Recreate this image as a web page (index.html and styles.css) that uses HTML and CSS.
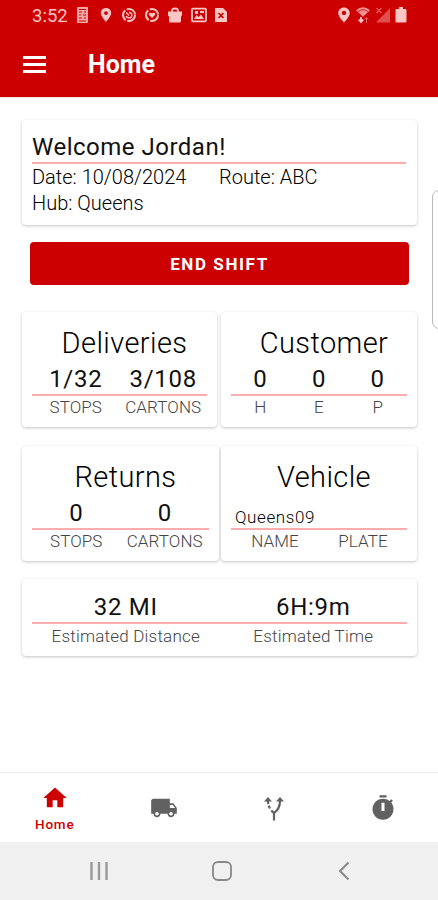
FILE: index.html
```html
<!DOCTYPE html>
<html lang="en">
<head>
    <meta charset="UTF-8">
    <meta name="viewport" content="width=device-width, initial-scale=1.0">
    <title>Home</title>
    <link rel="stylesheet" href="styles.css">
</head>
<body>
    <div class="app">
        <div class="status-bar">
            <span class="time">3:52</span>
            <div class="status-left">
                <svg width="14" height="18" viewBox="0 0 14 18"><rect x="1" y="1" width="11" height="16" rx="1" fill="currentColor" opacity=".85"/><path d="M3 3.500h7M3 6h3M8 6h2M3 9h2M7 9h3M3 12h3M8 12h2M3 15h7" stroke="#c00" stroke-width="1"/></svg>
                <svg width="14" height="18" viewBox="0 0 14 18"><path fill-rule="evenodd" d="M7 2C4 2 1.800 4.200 1.800 7.100 1.800 10.600 7 16 7 16s5.200-5.400 5.200-8.900C12.200 4.200 10 2 7 2zm0 3.200a1.900 1.900 0 1 1 0 3.800 1.900 1.900 0 0 1 0-3.800z" fill="currentColor"/></svg>
                <svg width="14" height="18" viewBox="0 0 14 18"><circle cx="7" cy="9" r="6" fill="none" stroke="currentColor" stroke-width="2" stroke-dasharray="11 1.600"/><path d="M4.200 6.500L7 9.500M7 6.500q3 0 2.800 2.800T7 11.800 4.300 10" fill="none" stroke="currentColor" stroke-width="1.500"/></svg>
                <svg width="14" height="18" viewBox="0 0 14 18"><circle cx="7" cy="9" r="6" fill="none" stroke="currentColor" stroke-width="2" stroke-dasharray="11 1.600"/><path d="M7 12L3.800 8.700C3.200 6.500 6 6 7 7.500 8 6 10.800 6.500 10.200 8.700z" fill="currentColor"/></svg>
                <svg width="14" height="18" viewBox="0 0 14 18"><path d="M0 5.500h14v4l-1 1v4.500q0 1.500-1.500 1.500h-9Q1 16.500 1 15v-4.500l-1-1z" fill="currentColor"/><path d="M4 6V4.500Q4 2.500 7 2.500t3 2V6" fill="none" stroke="currentColor" stroke-width="1.800"/></svg>
                <svg width="16" height="18" viewBox="0 0 16 18"><rect x="1" y="2.700" width="14" height="12.600" rx="1" fill="none" stroke="currentColor" stroke-width="1.800"/><path d="M3 13l2.500-4 2 2L10 8.500l3 4.500zM4 5h3v3H4zM9 5h4v2H9z" fill="currentColor"/></svg>
                <svg class="file-icon" width="14" height="18" viewBox="0 0 14 18"><path d="M1 2h8l4 4v10H1z" fill="currentColor"/><path d="M4.500 7l5 5M9.500 7l-5 5" stroke="#c00" stroke-width="1.700"/></svg>
            </div>
            <div class="status-right">
                <svg width="14" height="18" viewBox="0 0 14 18"><path fill-rule="evenodd" d="M7 1.500C3.700 1.500 1.200 4 1.200 7 1.200 10.800 7 16.500 7 16.500S12.800 10.800 12.800 7C12.800 4 10.300 1.500 7 1.500zm0 3.200a2.200 2.200 0 1 1 0 4.400 2.200 2.200 0 0 1 0-4.400z" fill="currentColor"/></svg>
                <svg width="16" height="18" viewBox="0 0 16 18"><path d="M1 4.200Q8-1.500 15 4.200L8 10.800z" fill="currentColor" opacity=".75"/><path d="M3 5.700q5-4 10 0" fill="none" stroke="#c00" stroke-width=".8"/><path d="M6 11v3" stroke="currentColor" stroke-width="1.800"/><path d="M3 14l3-1.500L9 14l-3 3.500z" fill="currentColor"/><path d="M11.500 17v-5M9.800 13.600l1.700-2 1.700 2" fill="none" stroke="currentColor" opacity=".5"/></svg>
                <svg width="16" height="18" viewBox="0 0 16 18"><path d="M15 2v14.500H1z" fill="currentColor" opacity=".4"/><path d="M1.500 2l5 5M6.500 2l-5 5" stroke="currentColor" stroke-width="1.300" opacity=".45"/></svg>
                <svg width="12" height="18" viewBox="0 0 12 18"><path d="M4 1h4v2h2.500q1 0 1 1v11.500q0 1-1 1h-9q-1 0-1-1V4q0-1 1-1H4z" fill="currentColor"/></svg>
            </div>
        </div>

        <div class="app-bar">
            <div class="menu-btn"><span></span><span></span><span></span></div>
            <h1 class="app-title">Home</h1>
        </div>

        <div class="content">
            <div class="card welcome">
                <h2 class="welcome-title">Welcome Jordan!</h2>
                <div class="welcome-row">
                    <span class="date">Date: 10/08/2024</span>
                    <span>Route: ABC</span>
                </div>
                <div class="welcome-row">Hub: Queens</div>
            </div>

            <button class="btn">END SHIFT</button>

            <div class="card-row first">
                <div class="card stat">
                    <div class="card-title">Deliveries</div>
                    <div class="values"><span>1/32</span><span>3/108</span></div>
                    <div class="labels"><span>STOPS</span><span>CARTONS</span></div>
                </div>
                <div class="card stat">
                    <div class="card-title">Customer</div>
                    <div class="values thirds"><span>0</span><span>0</span><span>0</span></div>
                    <div class="labels thirds"><span>H</span><span>E</span><span>P</span></div>
                </div>
            </div>

            <div class="card-row second">
                <div class="card stat">
                    <div class="card-title">Returns</div>
                    <div class="values"><span>0</span><span>0</span></div>
                    <div class="labels"><span>STOPS</span><span>CARTONS</span></div>
                </div>
                <div class="card stat">
                    <div class="card-title">Vehicle</div>
                    <div class="values"><span class="vehicle-name">Queens09</span><span></span></div>
                    <div class="labels"><span>NAME</span><span>PLATE</span></div>
                </div>
            </div>

            <div class="card estimate">
                <div class="values"><span>32 MI</span><span>6H:9m</span></div>
                <div class="labels"><span>Estimated Distance</span><span>Estimated Time</span></div>
            </div>

            <div class="edge-handle"></div>
        </div>

        <div class="bottom-nav">
            <div class="nav-item active">
                <svg width="28" height="28" viewBox="0 0 24 24"><path d="M10 20v-6h4v6h5v-8h3L12 3 2 12h3v8z" fill="currentColor"/></svg>
                <span>Home</span>
            </div>
            <div class="nav-item">
                <svg width="28" height="28" viewBox="0 0 24 24"><path d="M20 8h-3V4H3c-1.100 0-2 .9-2 2v11h2c0 1.660 1.340 3 3 3s3-1.340 3-3h6c0 1.660 1.340 3 3 3s3-1.340 3-3h2v-5l-3-4zM6 18.500c-.83 0-1.500-.67-1.500-1.500s.67-1.500 1.500-1.500 1.500.67 1.500 1.500-.67 1.500-1.500 1.500zm13.500-9l1.960 2.500H17V9.500h2.500zm-1.500 9c-.83 0-1.500-.67-1.500-1.500s.67-1.500 1.500-1.500 1.500.67 1.500 1.500-.67 1.500-1.500 1.500z" fill="currentColor"/></svg>
            </div>
            <div class="nav-item">
                <svg width="28" height="28" viewBox="0 0 28 28"><path d="M4 7.500l4-4.500L12 7.500zM16 7.500l4-4.500L24 7.500z" fill="currentColor"/><path d="M14 26.500V19Q20 15 20 7M14 19Q12.500 18 11.300 16.300" fill="none" stroke="currentColor" stroke-width="2.200"/><path d="M8 7q0 4 2 7.500" fill="none" stroke="currentColor" stroke-width="2.200" stroke-dasharray="3 1.700"/></svg>
            </div>
            <div class="nav-item">
                <svg width="28" height="28" viewBox="0 0 24 24"><path fill-rule="evenodd" d="M15 1H9v2h6V1zm-4.300 13.500h2.600V7.500h-2.600v7zm8.330-7.110l1.420-1.420c-.43-.51-.9-.99-1.410-1.410l-1.420 1.420C16.070 4.740 14.120 4 12 4c-4.970 0-9 4.030-9 9s4.020 9 9 9 9-4.030 9-9c0-2.120-.74-4.070-1.970-5.610z" fill="currentColor"/></svg>
            </div>
        </div>

        <div class="system-nav">
            <svg width="22" height="22" viewBox="0 0 22 22"><path d="M3.500 2v18M11 2v18M18.500 2v18" stroke="#999" stroke-width="2.400"/></svg>
            <svg width="22" height="22" viewBox="0 0 22 22"><rect x="2" y="2" width="18" height="18" rx="5" fill="none" stroke="#888" stroke-width="1.800"/></svg>
            <svg width="22" height="22" viewBox="0 0 22 22"><path d="M15.500 2.500L7 11l8.500 8.500" fill="none" stroke="#888" stroke-width="2"/></svg>
        </div>
    </div>
</body>
</html>
```

FILE: styles.css
```css
* {
    margin: 0;
    padding: 0;
    box-sizing: border-box;
    font-family: Roboto, sans-serif;
}

body {
    background-color: #fff;
}

svg {
    display: block;
    flex-shrink: 0;
}

.app {
    height: 900px;
    display: flex;
    flex-direction: column;
    overflow: hidden;
}

.status-bar {
    height: 32px;
    padding: 0 31px 2px 32px;
    display: flex;
    align-items: center;
    background-color: #c00;
    color: #ffc4c4;
}

.time {
    width: 44px;
    padding-top: 2px;
    font-size: 18.5px;
    line-height: 32px;
}

.status-left {
    display: flex;
    gap: 9px;
}

.file-icon {
    margin-left: -2px;
}

.status-right {
    display: flex;
    gap: 4px;
    margin-left: auto;
}

.app-bar {
    height: 65px;
    padding: 0 23px;
    display: flex;
    align-items: center;
    background-color: #c00;
    color: #fff;
}

.menu-btn {
    width: 23px;
    margin: 0 42px 0 0;
    display: flex;
    flex-direction: column;
    gap: 4px;
}

.menu-btn span {
    height: 3px;
    background-color: #fff;
}

.app-title {
    font-size: 25px;
    font-weight: 700;
    line-height: 30px;
}

.content {
    position: relative;
    flex: 1;
    padding: 22px 21px 0 22px;
    border-top: 1px solid #f3e3e3;
}

.card {
    background-color: #fff;
    border-radius: 4px;
    box-shadow: 0 1px 3px rgba(0, 0, 0, 0.24);
}

.welcome {
    height: 105px;
    padding: 12px 11px 0 10px;
    font-size: 20px;
    font-weight: 300;
    color: #000;
}

.welcome-title {
    height: 32px;
    border-bottom: 2px solid #fbacac;
    font-size: 24px;
    font-weight: 400;
    letter-spacing: 0.5px;
    line-height: 31px;
    color: #111;
}

.welcome-row {
    display: flex;
    line-height: 26px;
}

.date {
    width: 187px;
}

.btn {
    display: block;
    width: 379px;
    height: 43px;
    margin: 17px 0 0 8px;
    background-color: #c00;
    color: #fff;
    border: none;
    border-radius: 4px;
    font-size: 17px;
    font-weight: 700;
    letter-spacing: 1.6px;
}

.card-row {
    display: grid;
    gap: 4px;
}

.first {
    grid-template-columns: 195px 196px;
    margin-top: 27px;
}

.second {
    grid-template-columns: 197px 196px;
    gap: 2px;
    margin-top: 19px;
}

.stat {
    height: 115px;
    padding: 14px 10px 0;
}

.card-title {
    padding-left: 10px;
    text-align: center;
    font-size: 29px;
    font-weight: 300;
    letter-spacing: 0.4px;
    line-height: 34px;
    color: #000;
}

.values,
.labels {
    display: grid;
    grid-template-columns: 1fr 1fr;
    text-align: center;
}

.thirds {
    grid-template-columns: repeat(3, 1fr);
}

.values {
    height: 36px;
    border-bottom: 2px solid #fbacac;
    font-size: 24px;
    letter-spacing: 0.7px;
    line-height: 38px;
    color: #111;
}

.labels {
    font-size: 17px;
    font-weight: 300;
    letter-spacing: 0.1px;
    line-height: 22px;
    color: #444;
}

.values .vehicle-name {
    padding-left: 4px;
    font-size: 17px;
    font-weight: 300;
    letter-spacing: 0.6px;
    line-height: 46px;
    text-align: left;
    color: #000;
}

.estimate {
    height: 77px;
    margin-top: 18px;
    padding: 9px 10px 0;
}

.estimate .labels {
    letter-spacing: 0.2px;
    line-height: 24px;
}

/* Samsung edge panel handle */
.edge-handle {
    position: absolute;
    top: 92px;
    right: -10px;
    width: 16px;
    height: 139px;
    border: 1px solid #bbb;
    border-radius: 7px;
    background-color: #fff;
}

.bottom-nav {
    height: 70px;
    display: grid;
    grid-template-columns: repeat(4, 1fr);
    border-top: 1px solid #eee;
    color: #616161;
}

.nav-item {
    display: flex;
    flex-direction: column;
    align-items: center;
    justify-content: center;
}

.active {
    padding-top: 5px;
    color: #c00;
    font-size: 13.5px;
    font-weight: 500;
    line-height: 24px;
    letter-spacing: 0.8px;
}

.system-nav {
    height: 58px;
    padding: 0 83px 0 88px;
    display: flex;
    align-items: center;
    justify-content: space-between;
    background-color: #f0f0f0;
}
```
